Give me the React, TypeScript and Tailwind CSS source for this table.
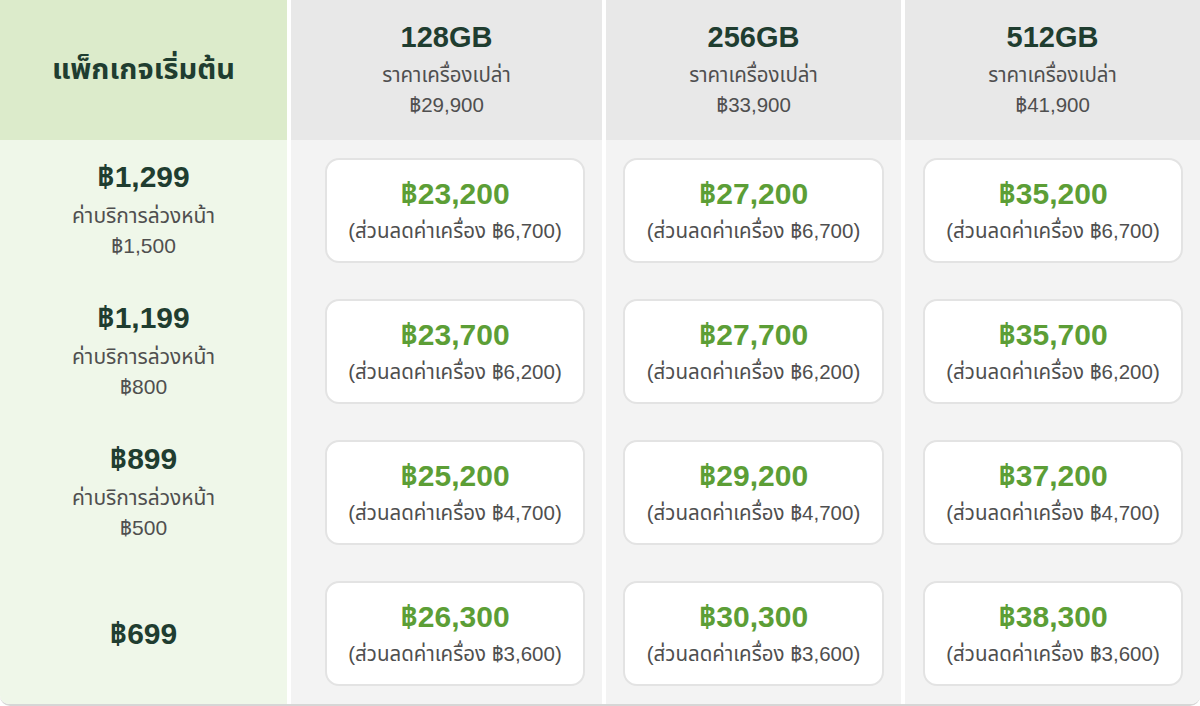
const FONT = { fontFamily: '"Liberation Sans", "Noto Sans Thai", "Noto Sans", Arial, sans-serif' };

const columns = [
  { size: '128GB', price: '฿29,900' },
  { size: '256GB', price: '฿33,900' },
  { size: '512GB', price: '฿41,900' },
];

const packages = [
  { fee: '฿1,299', advance: '฿1,500', prices: ['฿23,200', '฿27,200', '฿35,200'], discount: '฿6,700' },
  { fee: '฿1,199', advance: '฿800', prices: ['฿23,700', '฿27,700', '฿35,700'], discount: '฿6,200' },
  { fee: '฿899', advance: '฿500', prices: ['฿25,200', '฿29,200', '฿37,200'], discount: '฿4,700' },
  { fee: '฿699', advance: '', prices: ['฿26,300', '฿30,300', '฿38,300'], discount: '฿3,600' },
];

const cellPad = ['pl-[34px] pr-[17px]', 'px-[17px]', 'pl-[18px] pr-[17px]'];

const PriceCard = ({ price, discount }: { price: string; discount: string }) => (
  <div className="flex h-[105px] w-full flex-col items-center justify-center rounded-[14px] border-2 border-[#e3e3e3] bg-white">
    <span className="text-[30px] font-bold leading-[34px] text-[#5c9e36]">{price}</span>
    <span className="mt-[6px] text-[20.5px] leading-[28px] text-[#4f4f4f]">(ส่วนลดค่าเครื่อง {discount})</span>
  </div>
);

export default function App() {
  return (
    <div className="h-[706px] w-[1200px] bg-white" style={FONT}>
      <div className="grid grid-cols-[287px_311px_295px_295px] grid-rows-[140px_repeat(4,141px)] gap-x-[4px] overflow-hidden rounded-b-[10px] border-b-2 border-[#d6d6d6] bg-white">
        <div className="flex items-center justify-center bg-[#dcebcb]">
          <span className="text-[29px] font-bold text-[#1f3d30]">แพ็กเกจเริ่มต้น</span>
        </div>
        {columns.map((col) => (
          <div key={col.size} className="flex flex-col items-center justify-center bg-[#e8e8e8]">
            <span className="text-[29px] font-bold leading-[34px] text-[#1f3d30]">{col.size}</span>
            <span className="mt-[6px] text-[20.5px] leading-[30px] text-[#4f4f4f]">ราคาเครื่องเปล่า</span>
            <span className="text-[20.5px] leading-[30px] text-[#4f4f4f]">{col.price}</span>
          </div>
        ))}
        {packages.map((pkg) => (
          <>
            <div key={pkg.fee} className="flex flex-col items-center justify-center bg-[#eff7e9]">
              <span className="text-[30px] font-bold leading-[32px] text-[#1f3d30]">{pkg.fee}</span>
              {pkg.advance && (
                <>
                  <span className="mt-[8px] text-[21px] leading-[30px] text-[#4f4f4f]">ค่าบริการล่วงหน้า</span>
                  <span className="text-[21px] leading-[30px] text-[#4f4f4f]">{pkg.advance}</span>
                </>
              )}
            </div>
            {pkg.prices.map((price, i) => (
              <div key={price} className={`flex items-center bg-[#f3f3f3] ${cellPad[i]}`}>
                <PriceCard price={price} discount={pkg.discount} />
              </div>
            ))}
          </>
        ))}
      </div>
    </div>
  );
}
